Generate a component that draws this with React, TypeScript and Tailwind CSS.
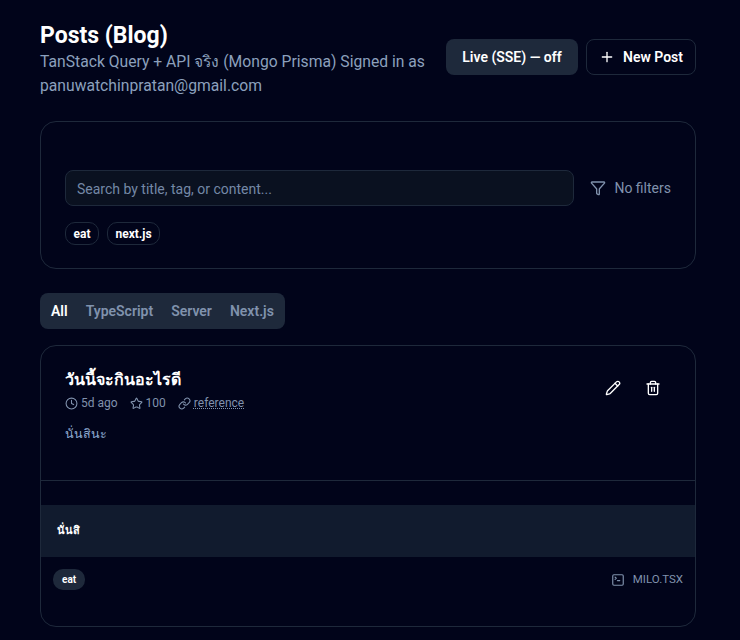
import { Clock, Filter, Link, Pencil, Plus, Star, SquareTerminal, Trash2 } from "lucide-react"

const FONT = "font-['Roboto','Noto_Sans',sans-serif]"

const TABS = ["TypeScript", "Server", "Next.js"]

function Chip({ label }: { label: string }) {
  return (
    <span className="flex h-[23px] items-center rounded-[10px] border border-[#1e293b] px-[7.5px] text-xs font-bold text-white">
      {label}
    </span>
  )
}

export default function App() {
  return (
    <div className={`${FONT} h-[640px] overflow-hidden bg-[#01041a] pl-10 pr-11 pt-5`}>
      {/* Header */}
      <div className="flex items-start justify-between">
        <div className="w-[395px]">
          <h1 className="mt-px text-[23px] leading-[29px] font-bold text-white">Posts (Blog)</h1>
          <p className="text-[15.7px] leading-6 text-[#8ca0bd]">
            TanStack Query + API จริง (Mongo Prisma) Signed in as panuwatchinpratan@gmail.com
          </p>
        </div>
        <div className="mt-[19px] flex gap-2">
          <button className="h-9 w-[132px] rounded-lg bg-[#1e293b] text-sm font-semibold text-white">
            Live (SSE) — off
          </button>
          <button className="flex h-9 w-[110px] items-center justify-center gap-2 rounded-lg border border-[#1e293b] text-sm font-semibold text-white">
            <Plus className="h-4 w-4" />
            New Post
          </button>
        </div>
      </div>

      {/* Search */}
      <div className="mt-[23px] h-[148px] rounded-2xl border border-[#1e293b] px-6 pt-12">
        <div className="flex items-center gap-4">
          <input
            placeholder="Search by title, tag, or content..."
            className="h-9 flex-1 rounded-lg border border-[#1e293b] bg-[#0a1120] px-[11px] pt-px text-sm outline-none placeholder:text-[#7488a6]"
          />
          <div className="flex items-center gap-2 text-sm text-[#8092ad]">
            <Filter className="h-4 w-4" />
            No filters
          </div>
        </div>
        <div className="mt-4 flex gap-2">
          <Chip label="eat" />
          <Chip label="next.js" />
        </div>
      </div>

      {/* Tabs */}
      <div className="mt-6 flex h-9 w-[245px] items-center gap-[18px] rounded-lg bg-[#1e293b] pl-[11px] text-sm font-semibold text-[#8092ad]">
        <span className="text-white">All</span>
        {TABS.map((t) => (
          <span key={t}>{t}</span>
        ))}
      </div>

      {/* Post */}
      <div className="mt-4 h-[282px] overflow-hidden rounded-2xl border border-[#1e293b]">
        <div className="flex h-[135px] justify-between border-b border-[#1e293b] pl-6 pr-[34px] pt-[22px]">
          <div>
            <h2 className="text-base leading-6 font-semibold text-white">วันนี้จะกินอะไรดี</h2>
            <div className="mt-[3px] flex items-center gap-3 text-xs text-[#8092ad]">
              <span className="flex items-center gap-[3px]">
                <Clock className="h-[13px] w-[13px]" />
                5d ago
              </span>
              <span className="flex items-center gap-[3px]">
                <Star className="h-[13px] w-[13px]" />
                100
              </span>
              <span className="flex items-center gap-[3px]">
                <Link className="h-[13px] w-[13px]" />
                <span className="underline decoration-dotted">reference</span>
              </span>
            </div>
            <p className="mt-[13px] text-[12.5px] leading-5 text-[#8ca8cf]">นั่นสินะ</p>
          </div>
          <div className="flex gap-6 pt-3 text-white">
            <Pencil className="h-4 w-4" />
            <Trash2 className="h-4 w-4" />
          </div>
        </div>
        <div className="mt-6 flex h-[52px] items-center bg-[#111b2e] px-4 text-[11px] font-semibold text-white">
          นั่นสิ
        </div>
        <div className="flex items-center justify-between px-3 pt-3">
          <span className="flex h-[21px] items-center rounded-[10px] bg-[#1e293b] px-[9px] text-[10px] font-bold text-white">
            eat
          </span>
          <span className="flex items-center gap-2 text-[11.5px] text-[#8092ad]">
            <SquareTerminal className="h-[14px] w-[14px]" />
            MILO.TSX
          </span>
        </div>
      </div>
    </div>
  )
}
